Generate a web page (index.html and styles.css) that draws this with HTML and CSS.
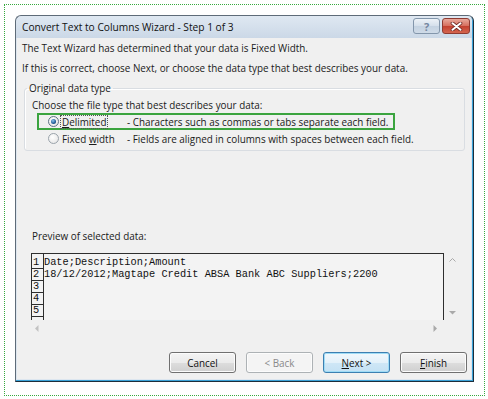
FILE: index.html
```html
<!DOCTYPE html>
<html lang="en">
<head>
    <meta charset="UTF-8">
    <title>Convert Text to Columns Wizard - Step 1 of 3</title>
    <link rel="stylesheet" href="styles.css">
</head>
<body>
    <div class="frame">
        <div class="window">
            <div class="titlebar">
                <span class="title">Convert Text to Columns Wizard - Step 1 of 3</span>
                <span class="cap-btn help">?</span>
                <span class="cap-btn close">
                    <svg width="13" height="9" viewBox="0 0 13 9">
                        <path d="M2.5 1.2 L10.5 7.8 M10.5 1.2 L2.5 7.8" stroke="#6b2620" stroke-width="3.6" stroke-linecap="round"/>
                        <path d="M2.5 1.2 L10.5 7.8 M10.5 1.2 L2.5 7.8" stroke="#fff" stroke-width="2" stroke-linecap="round"/>
                    </svg>
                </span>
            </div>

            <div class="content">
                <p class="line">The Text Wizard has determined that your data is Fixed Width.</p>
                <p class="line second">If this is correct, choose Next, or choose the data type that best describes your data.</p>

                <fieldset class="group">
                    <legend>Original data type</legend>
                    <p class="choose">Choose the file type that best describes your data:</p>
                    <div class="radio-row marked">
                        <span class="radio checked"></span>
                        <span class="label-wrap"><span class="label focus"><u>D</u>elimited</span></span>
                        <span class="desc">- Characters such as commas or tabs separate each field.</span>
                    </div>
                    <div class="radio-row">
                        <span class="radio"></span>
                        <span class="label-wrap"><span class="label">Fixed <u>w</u>idth</span></span>
                        <span class="desc">- Fields are aligned in columns with spaces between each field.</span>
                    </div>
                </fieldset>

                <p class="preview-label">Preview of selected data:</p>
                <div class="preview">
                    <div class="grid">
                        <div class="nums">
                            <div class="num">1</div>
                            <div class="num">2</div>
                            <div class="num">3</div>
                            <div class="num">4</div>
                            <div class="num">5</div>
                            <div class="num"></div>
                        </div>
                        <div class="data">
                            <div class="row">Date;Description;Amount</div>
                            <div class="row">18/12/2012;Magtape Credit ABSA Bank ABC Suppliers;2200</div>
                        </div>
                    </div>
                    <div class="vscroll">
                        <svg width="7" height="4" viewBox="0 0 7 4"><path d="M0.5 3.5 L3.5 0.5 L6.5 3.5" fill="none" stroke="#a9a9a9" stroke-width="1"/></svg>
                        <svg width="7" height="4" viewBox="0 0 7 4"><path d="M0 0 L7 0 L3.5 3.5 Z" fill="#a9a9a9"/></svg>
                    </div>
                    <div class="hscroll">
                        <svg width="4" height="7" viewBox="0 0 4 7"><path d="M3.5 0 L3.5 7 L0 3.5 Z" fill="#c2c2c2"/></svg>
                        <svg width="4" height="7" viewBox="0 0 4 7"><path d="M0.5 0 L0.5 7 L4 3.5 Z" fill="#a9a9a9"/></svg>
                    </div>
                    <div class="corner"></div>
                </div>

                <div class="buttons">
                    <span class="btn">Cancel</span>
                    <span class="btn disabled">&lt; Back</span>
                    <span class="btn default"><u>N</u>ext &gt;</span>
                    <span class="btn"><u>F</u>inish</span>
                </div>
            </div>
        </div>
    </div>
</body>
</html>
```

FILE: styles.css
```css
body {
    margin: 0;
    background: #fff;
    font-family: "Open Sans", "Noto Sans", sans-serif;
    font-size: 9.9px;
    color: #1a1a1a;
}
p {
    margin: 0;
}
u {
    text-decoration-thickness: 1px;
    text-underline-offset: 1px;
}
.frame {
    box-sizing: border-box;
    margin: 4px;
    width: 481px;
    height: 392px;
    border: 1px dotted #36a93e;
    padding: 10px 0 0 10px;
}
.window {
    box-sizing: border-box;
    width: 459px;
    height: 367px;
    display: flex;
    flex-direction: column;
    border: 1px solid #5e6b78;
    border-right-color: #1d2e3b;
    border-bottom-color: #1d2e3b;
    border-radius: 6px 6px 0 0;
    padding: 0 2px 2px 1px;
    background: linear-gradient(#dfe8f2, #cbd8e7 22px, #dde6ef 22px);
    box-shadow: inset -1px -1px 0 #3aa2d8;
}
.titlebar {
    height: 22px;
    display: flex;
    align-items: flex-start;
    padding-left: 5px;
}
.title {
    flex: 1;
    line-height: 22px;
    font-size: 10.2px;
    color: #111;
}
.cap-btn {
    box-sizing: border-box;
    height: 16px;
    margin-top: 2px;
    border-radius: 3px;
    display: flex;
    align-items: center;
    justify-content: center;
}
.help {
    width: 27px;
    border: 1px solid #8396ab;
    background: linear-gradient(#edf2f7, #d4dfeb 50%, #c4d2e1 51%, #cfdbe8);
    color: #7486a0;
    font-weight: bold;
    font-size: 11px;
}
.close {
    width: 28px;
    margin: 2px 1px 0 2px;
    border: 1px solid #8e3b32;
    background: linear-gradient(#e8a99c, #d66e5d 50%, #c3402f 51%, #d4654f);
}
.content {
    flex: 1;
    background: #f0f0f0;
    padding: 2px 0 0 5px;
}
.line {
    line-height: 16px;
}
.second {
    margin-top: 4px;
}
.group {
    margin: 5px 6px 0 2px;
    padding: 3px 0 3px 7px;
    border: 1px solid #d9dde2;
    border-radius: 3px;
    box-shadow: inset 1px 1px 0 #fff;
}
.group legend {
    margin-left: -5px;
    padding: 0 2px;
    line-height: 14px;
}
.choose {
    line-height: 14px;
}
.radio-row {
    box-sizing: border-box;
    display: flex;
    align-items: center;
    height: 17px;
    width: 358px;
    margin: 1px 0 0 5px;
    padding-left: 9px;
    border: 2px solid transparent;
    white-space: nowrap;
}
.radio-row + .radio-row {
    margin-top: 0;
}
.marked {
    border-color: #3ba43f;
}
.radio {
    box-sizing: border-box;
    flex: none;
    width: 11px;
    height: 11px;
    border-radius: 50%;
    border: 1px solid #9aa3ab;
    background: radial-gradient(circle at 40% 35%, #fff, #e2e2e2);
    display: flex;
    align-items: center;
    justify-content: center;
}
.checked {
    border-color: #5f7386;
}
.checked::after {
    content: "";
    width: 5px;
    height: 5px;
    border-radius: 50%;
    background: radial-gradient(circle at 40% 35%, #8fc4ee, #1e5a96 60%, #0f2c55);
}
.label-wrap {
    flex: none;
    width: 67px;
    margin-left: 1px;
}
.label {
    display: inline-block;
    padding: 0 1px;
    line-height: 12px;
    border: 1px dotted transparent;
}
.focus {
    border-color: #555;
}
.preview-label {
    margin: 78px 0 0 10px;
    line-height: 14px;
}
.preview {
    display: grid;
    grid-template-columns: 413px 17px;
    grid-template-rows: 67px 17px;
    margin: 10px 0 0 9px;
}
.grid {
    box-sizing: border-box;
    display: flex;
    align-items: flex-start;
    overflow: hidden;
    background: #f3f3f3;
    border: 1px solid #2e2e2e;
    border-bottom: none;
    font-family: "Liberation Mono", "Courier New", monospace;
    font-size: 10.3px;
    color: #111;
}
.nums {
    width: 11px;
    flex: none;
    align-self: stretch;
    padding-top: 3px;
    border-right: 1px solid #2e2e2e;
}
.num {
    box-sizing: border-box;
    height: 12px;
    line-height: 11px;
    padding-left: 1px;
    border-bottom: 1px solid #2e2e2e;
}
.data {
    padding-top: 3px;
    white-space: nowrap;
}
.row {
    height: 12px;
    line-height: 11px;
}
.vscroll {
    display: flex;
    flex-direction: column;
    justify-content: space-between;
    align-items: center;
    padding: 5px 0 5px;
}
.hscroll {
    display: flex;
    justify-content: space-between;
    align-items: center;
    padding: 0 7px 0 4px;
}
.buttons {
    display: flex;
    justify-content: flex-end;
    gap: 10px;
    margin-top: 15px;
    padding-right: 4px;
}
.btn {
    box-sizing: border-box;
    width: 67px;
    height: 21px;
    display: flex;
    align-items: center;
    justify-content: center;
    border: 1px solid #707070;
    border-radius: 3px;
    background: linear-gradient(#f4f4f4, #ebebeb 50%, #dddddd 51%, #cfcfcf);
    box-shadow: inset 0 0 0 1px #fcfcfc;
    color: #111;
}
.disabled {
    border-color: #adb2b5;
    background: #f4f4f4;
    color: #8a8a8a;
}
.default {
    border-color: #3c7fb1;
    background: linear-gradient(#f2f8fc, #e3f1fa 50%, #cfe7f6 51%, #c4e1f4);
    box-shadow: inset 0 0 0 1px #9fdcf6;
}
```
